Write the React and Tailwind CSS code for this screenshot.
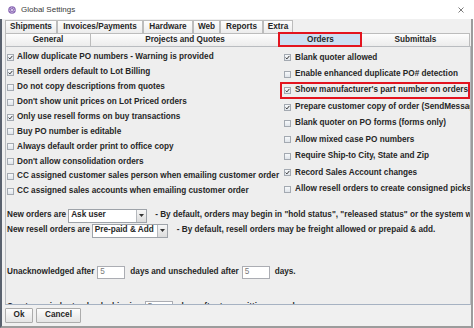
import React from "react";

const leftOptions = [
  ["Allow duplicate PO numbers - Warning is provided", true],
  ["Resell orders default to Lot Billing", true],
  ["Do not copy descriptions from quotes", false],
  ["Don't show unit prices on Lot Priced orders", false],
  ["Only use resell forms on buy transactions", true],
  ["Buy PO number is editable", false],
  ["Always default order print to office copy", false],
  ["Don't allow consolidation orders", false],
  ["CC assigned customer sales person when emailing customer order", false],
  ["CC assigned sales accounts when emailing customer order", false],
];

const rightOptions = [
  ["Blank quoter allowed", true],
  ["Enable enhanced duplicate PO# detection", false],
  ["Show manufacturer's part number on orders", true, true],
  ["Prepare customer copy of order (SendMessage)", true],
  ["Blank quoter on PO forms (forms only)", false],
  ["Allow mixed case PO numbers", false],
  ["Require Ship-to City, State and Zip", false],
  ["Record Sales Account changes", true],
  ["Allow resell orders to create consigned picks", false],
];

const topTabs = [
  ["Shipments", "w-[52px]"],
  ["Invoices/Payments", "w-[86px]"],
  ["Hardware", "w-[50px]"],
  ["Web", "w-[27px]"],
  ["Reports", "w-[43px]"],
  ["Extra", "w-[30px]"],
];

function Check({ on }) {
  return (
    <span className="flex h-[7px] w-[7px] shrink-0 items-center justify-center border border-[#a3a9b1] bg-linear-to-b from-[#f7f9fb] to-[#dfe4ea]">
      {on && (
        <svg width="5" height="5" viewBox="0 0 5 5">
          <path d="M0.6 2.6 L1.9 3.9 L4.4 0.9" fill="none" stroke="#333" strokeWidth="1" />
        </svg>
      )}
    </span>
  );
}

function Combo({ value, width }) {
  return (
    <div className={`flex h-[14px] ${width} shrink-0 border border-[#9ea3a9] bg-white`}>
      <span className="flex flex-1 items-center pl-[2px]">{value}</span>
      <span className="flex w-[10px] items-center justify-center border-l border-[#b5b9be] bg-linear-to-b from-[#f6f6f6] to-[#dcdcdc]">
        <svg width="5" height="3" viewBox="0 0 5 3">
          <path d="M0 0 H5 L2.5 3 Z" fill="#333" />
        </svg>
      </span>
    </div>
  );
}

function NumBox({ value }) {
  return (
    <span className="flex h-[13px] w-[28px] shrink-0 items-center border border-[#abadb3] bg-white pl-[2px] font-normal text-[#7a7a7a]">
      {value}
    </span>
  );
}

export default function App() {
  return (
    <div className="flex h-[328px] w-[474px] flex-col overflow-hidden bg-white font-['Liberation_Sans',Arial,sans-serif] text-[8.2px] font-bold text-[#262626]">
      {/* Title bar */}
      <div className="flex h-[19px] shrink-0 items-center justify-between pl-[8px] pr-[10px]">
        <div className="flex items-center gap-[5px]">
          <svg width="8" height="8" viewBox="0 0 8 8">
            <circle cx="4" cy="4" r="3.8" fill="#8a68b4" />
            <circle cx="4" cy="4" r="2.3" fill="none" stroke="#ece3f6" strokeWidth="1" strokeDasharray="1 0.8" />
            <circle cx="4" cy="4" r="1" fill="#ece3f6" />
          </svg>
          <span className="text-[8px] font-normal text-[#3a3a3a]">Global Settings</span>
        </div>
        <svg width="6" height="6" viewBox="0 0 6 6">
          <path d="M0.5 0.5 L5.5 5.5 M5.5 0.5 L0.5 5.5" stroke="#5a5a5a" strokeWidth="0.8" />
        </svg>
      </div>

      {/* Dialog body */}
      <div className="flex w-[473px] flex-1 flex-col border-b-2 border-l-2 border-r-2 border-b-[#9c9c9c] border-l-[#59616e] border-r-[#9c9c9c] bg-[#f0f0f0] pl-[3px]">
        {/* Tab row 1 */}
        <div className="flex h-[14px] shrink-0 items-end">
          {topTabs.map(([label, w]) => (
            <div
              key={label}
              className={`flex h-[13px] ${w} items-center justify-center border-l border-r border-t border-[#bcbcbc] bg-linear-to-b from-[#fdfdfd] to-[#ececec]`}
            >
              {label}
            </div>
          ))}
        </div>

        {/* Tab row 2 */}
        <div className="flex h-[13px] shrink-0">
          <div className="flex w-[85px] items-center justify-center border-l border-t border-[#bcbcbc] bg-linear-to-b from-[#fdfdfd] to-[#ececec]">
            General
          </div>
          <div className="flex w-[189px] items-center justify-center border-l border-t border-[#bcbcbc] bg-linear-to-b from-[#fdfdfd] to-[#ececec]">
            Projects and Quotes
          </div>
          <div className="relative z-10 flex w-[82px] items-center justify-center border-l border-t border-[#9fb6cf] bg-[#cddff2] outline-2 -outline-offset-1 outline-[#e3141f]">
            Orders
          </div>
          <div className="flex w-[109px] items-center justify-center border-l border-r border-t border-[#bcbcbc] bg-linear-to-b from-[#fdfdfd] to-[#ececec]">
            Submittals
          </div>
        </div>

        {/* Orders panel */}
        <div className="flex h-[259px] w-[466px] shrink-0 flex-col overflow-hidden border border-[#b9bcc0] border-b-[#a6b2c2] bg-[#eeeeee] whitespace-nowrap">
          <div className="flex h-[152px] shrink-0">
            <div className="flex w-[274px] shrink-0 flex-col pl-[1px] pt-[3px]">
              {leftOptions.map(([label, on]) => (
                <div key={label} className="flex h-[14.9px] items-center gap-[3px]">
                  <Check on={on} />
                  <span>{label}</span>
                </div>
              ))}
            </div>
            <div className="flex min-w-0 flex-1 flex-col overflow-hidden pt-[2.5px]">
              {rightOptions.map(([label, on, marked]) => (
                <div
                  key={label}
                  className={`flex h-[16.45px] items-center gap-[4px] pl-[4px] ${marked ? "outline-2 -outline-offset-2 outline-[#e3141f]" : ""}`}
                >
                  <Check on={on} />
                  <span>{label}</span>
                </div>
              ))}
            </div>
          </div>

          <div className="mt-[9px] flex shrink-0 flex-col pl-[1px]">
            <div className="flex h-[15px] items-center">
              <span>New orders are</span>
              <span className="ml-[2px]">
                <Combo value="Ask user" width="w-[79px]" />
              </span>
              <span className="ml-[8px]">
                - By default, orders may begin in "hold status", "released status" or the system will assign them.
              </span>
            </div>
            <div className="flex h-[15px] items-center">
              <span>New resell orders are</span>
              <span className="ml-[2px]">
                <Combo value="Pre-paid & Add" width="w-[76px]" />
              </span>
              <span className="ml-[9px]">
                - By default, resell orders may be freight allowed or prepaid &amp; add.
              </span>
            </div>
          </div>

          <div className="mt-[27px] flex h-[15px] shrink-0 items-center pl-[1px]">
            <span>Unacknowledged after</span>
            <span className="ml-[3px]">
              <NumBox value="5" />
            </span>
            <span className="ml-[5px]">days and unscheduled after</span>
            <span className="ml-[3px]">
              <NumBox value="5" />
            </span>
            <span className="ml-[5px]">days.</span>
          </div>

          <div className="mt-[19.5px] flex h-[15px] shrink-0 items-center pl-[1px]">
            <span>Create reminder to check shipping</span>
            <span className="ml-[3px]">
              <NumBox value="5" />
            </span>
            <span className="ml-[6px]">days after transmitting on order</span>
          </div>
        </div>

        {/* Buttons */}
        <div className="flex h-[20px] shrink-0 items-center gap-[3px]">
          <button className="flex h-[15px] w-[28px] items-center justify-center rounded-[1px] border border-[#acacac] bg-linear-to-b from-[#fdfdfd] to-[#e4e4e4] font-bold">
            Ok
          </button>
          <button className="flex h-[15px] w-[45px] items-center justify-center rounded-[1px] border border-[#acacac] bg-linear-to-b from-[#fdfdfd] to-[#e4e4e4] font-bold">
            Cancel
          </button>
        </div>
      </div>
    </div>
  );
}
